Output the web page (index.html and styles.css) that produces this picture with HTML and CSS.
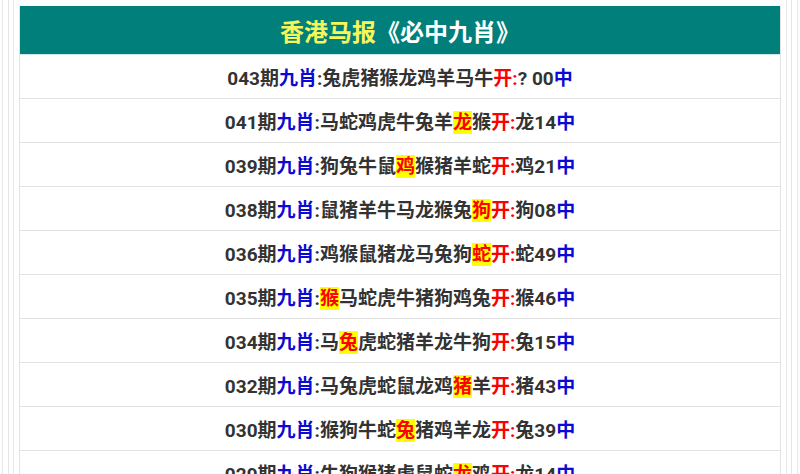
FILE: index.html
```html
<!DOCTYPE html>
<html lang="zh-CN">
<head>
    <meta charset="UTF-8">
    <meta name="viewport" content="width=device-width, initial-scale=1.0">
    <link rel="stylesheet" href="styles.css">
    <title>香港马报《必中九肖》</title>
</head>
<body>
    <div class="frame">
        <div class="frame-inner">
            <div class="box">
                <table class="list">
                    <tr>
                        <th><span class="hl-title">香港马报</span>《必中九肖》</th>
                    </tr>
                    <tr><td>043期<span class="blue">九肖</span>:兔虎猪猴龙鸡羊马牛<span class="red">开:</span>? 00<span class="blue">中</span></td></tr>
                    <tr><td>041期<span class="blue">九肖</span>:马蛇鸡虎牛兔羊<span class="hit">龙</span>猴<span class="red">开:</span>龙14<span class="blue">中</span></td></tr>
                    <tr><td>039期<span class="blue">九肖</span>:狗兔牛鼠<span class="hit">鸡</span>猴猪羊蛇<span class="red">开:</span>鸡21<span class="blue">中</span></td></tr>
                    <tr><td>038期<span class="blue">九肖</span>:鼠猪羊牛马龙猴兔<span class="hit">狗</span><span class="red">开:</span>狗08<span class="blue">中</span></td></tr>
                    <tr><td>036期<span class="blue">九肖</span>:鸡猴鼠猪龙马兔狗<span class="hit">蛇</span><span class="red">开:</span>蛇49<span class="blue">中</span></td></tr>
                    <tr><td>035期<span class="blue">九肖</span>:<span class="hit">猴</span>马蛇虎牛猪狗鸡兔<span class="red">开:</span>猴46<span class="blue">中</span></td></tr>
                    <tr><td>034期<span class="blue">九肖</span>:马<span class="hit">兔</span>虎蛇猪羊龙牛狗<span class="red">开:</span>兔15<span class="blue">中</span></td></tr>
                    <tr><td>032期<span class="blue">九肖</span>:马兔虎蛇鼠龙鸡<span class="hit">猪</span>羊<span class="red">开:</span>猪43<span class="blue">中</span></td></tr>
                    <tr><td>030期<span class="blue">九肖</span>:猴狗牛蛇<span class="hit">兔</span>猪鸡羊龙<span class="red">开:</span>兔39<span class="blue">中</span></td></tr>
                    <tr><td>029期<span class="blue">九肖</span>:牛狗猴猪虎鼠蛇<span class="hit">龙</span>鸡<span class="red">开:</span>龙14<span class="blue">中</span></td></tr>
                </table>
            </div>
        </div>
    </div>
</body>
</html>
```

FILE: styles.css
```css
/* Global */
body {
    margin: 0;
    padding: 0 2px;
    background-color: #fff;
    font-family: Roboto, "Noto Sans CJK SC", sans-serif;
    color: #333;
}

/* Nested page frames */
.frame {
    border-left: 1px solid #e6e6e6;
    border-right: 1px solid #e6e6e6;
    padding: 0 5px;
    min-height: 474px;
    box-sizing: border-box;
}

.frame-inner {
    border-left: 1px solid #e6e6e6;
    border-right: 1px solid #e6e6e6;
    padding: 0 4px;
    min-height: 474px;
    box-sizing: border-box;
}

.box {
    border-left: 1px solid #e9e9e9;
    border-right: 1px solid #e9e9e9;
    padding: 6px 5px 0;
    min-height: 474px;
    box-sizing: border-box;
}

/* Table */
.list {
    width: 100%;
    border-collapse: collapse;
    border-left: 1px solid #e3e3e3;
    border-right: 1px solid #e3e3e3;
}

.list th {
    height: 48px;
    padding: 0;
    background-color: #007f7b;
    border-bottom: 1px solid #cfe6ea;
    color: #fff;
    font-size: 24px;
    font-weight: bold;
    text-align: center;
}

.hl-title {
    color: #f6f65a;
}

.list td {
    height: 44px;
    padding: 0;
    border-bottom: 1px solid #e3e3e3;
    font-size: 19px;
    font-weight: bold;
    text-align: center;
    box-sizing: border-box;
}

.blue {
    color: #0a0ad0;
}

.red {
    color: #f00;
}

.hit {
    background-color: #ff0;
    color: #f00;
}
```
